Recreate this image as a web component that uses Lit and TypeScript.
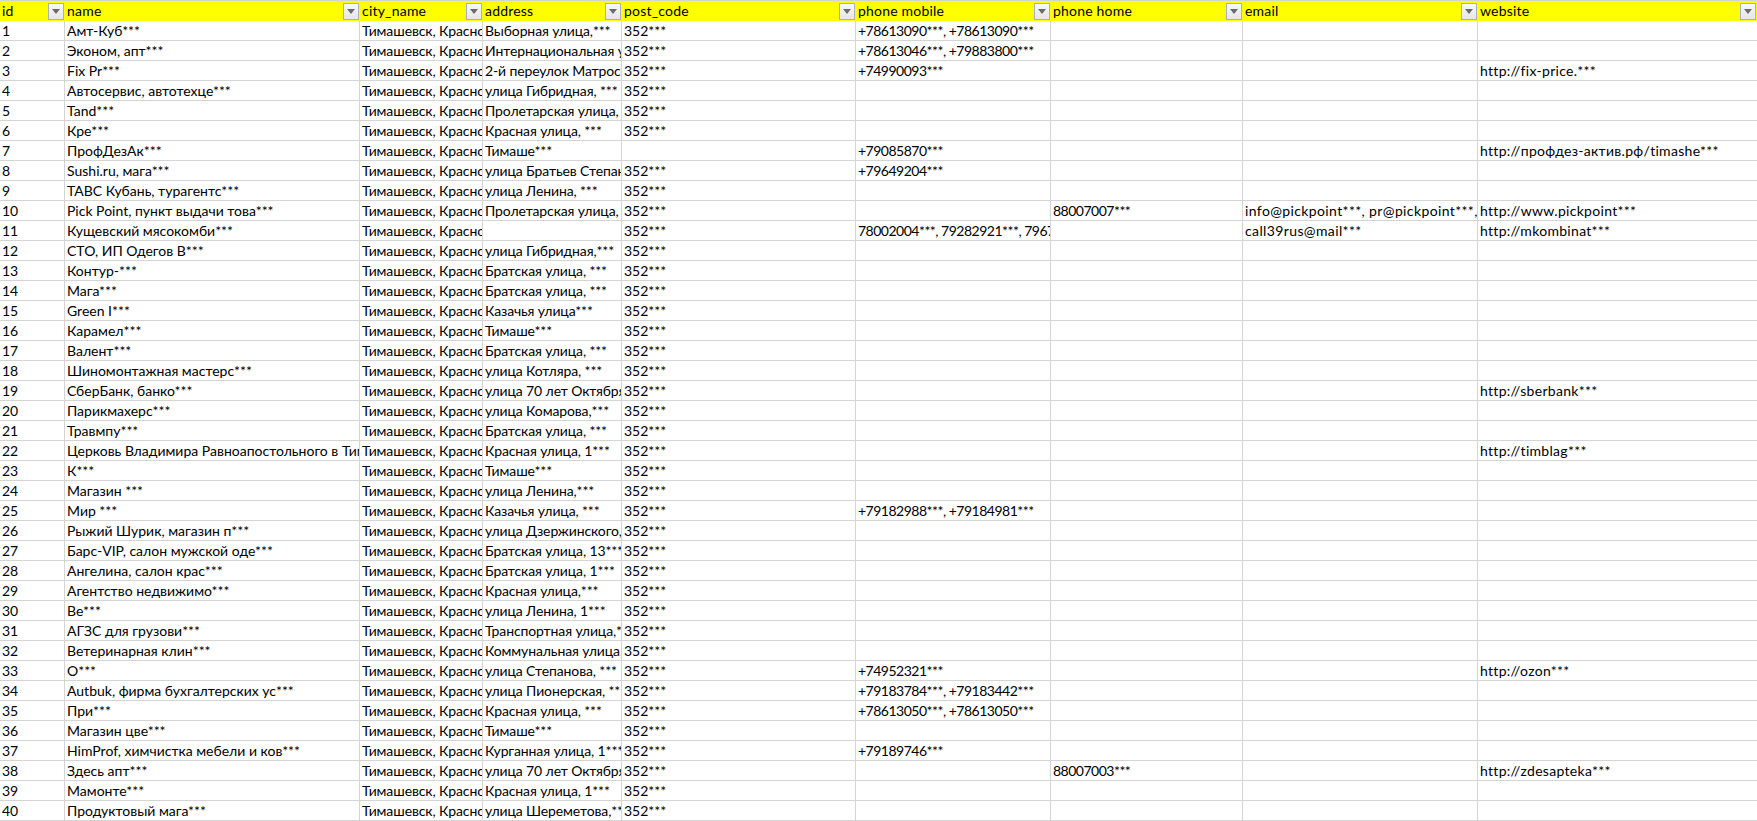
import { LitElement, html, css } from "lit";
import { customElement } from "lit/decorators.js";

type Row = { name: string; addr: string; post?: boolean; mobile?: string; home?: string; email?: string; web?: string };

const CITY = "Тимашевск, Краснодарский край";
const HEADERS = ["id", "name", "city_name", "address", "post_code", "phone mobile", "phone home", "email", "website"];
const COLUMN_CLASS = ["id", "name", "city", "addr", "post", "phone", "phone", "email", "web"];

const ROWS: Row[] = [
  { name: "Амт-Куб***", addr: "Выборная улица,***", mobile: "+78613090***, +78613090***" },
  { name: "Эконом, апт***", addr: "Интернациональная улица, ***", mobile: "+78613046***, +79883800***" },
  { name: "Fix Pr***", addr: "2-й переулок Матросова, ***", mobile: "+74990093***", web: "http://fix-price.***" },
  { name: "Автосервис, автотехце***", addr: "улица Гибридная, ***" },
  { name: "Tand***", addr: "Пролетарская улица, ***" },
  { name: "Кре***", addr: "Красная улица, ***" },
  { name: "ПрофДезАк***", addr: "Тимаше***", post: false, mobile: "+79085870***", web: "http://профдез-актив.рф/timashe***" },
  { name: "Sushi.ru, мага***", addr: "улица Братьев Степановых, ***", mobile: "+79649204***" },
  { name: "ТАВС Кубань, турагентс***", addr: "улица Ленина, ***" },
  { name: "Pick Point, пункт выдачи това***", addr: "Пролетарская улица, ***", home: "88007007***", email: "info@pickpoint***, pr@pickpoint***,", web: "http://www.pickpoint***" },
  { name: "Кущевский мясокомби***", addr: "", mobile: "78002004***, 79282921***, 79673***", email: "call39rus@mail***", web: "http://mkombinat***" },
  { name: "СТО, ИП Одегов В***", addr: "улица Гибридная,***" },
  { name: "Контур-***", addr: "Братская улица, ***" },
  { name: "Мага***", addr: "Братская улица, ***" },
  { name: "Green I***", addr: "Казачья улица***" },
  { name: "Карамел***", addr: "Тимаше***" },
  { name: "Валент***", addr: "Братская улица, ***" },
  { name: "Шиномонтажная мастерс***", addr: "улица Котляра, ***" },
  { name: "СберБанк, банко***", addr: "улица 70 лет Октября, ***", web: "http://sberbank***" },
  { name: "Парикмахерс***", addr: "улица Комарова,***" },
  { name: "Травмпу***", addr: "Братская улица, ***" },
  { name: "Церковь Владимира Равноапостольного в Тимашевске", addr: "Красная улица, 1***", web: "http://timblag***" },
  { name: "К***", addr: "Тимаше***" },
  { name: "Магазин ***", addr: "улица Ленина,***" },
  { name: "Мир ***", addr: "Казачья улица, ***", mobile: "+79182988***, +79184981***" },
  { name: "Рыжий Шурик, магазин п***", addr: "улица Дзержинского, ***" },
  { name: "Барс-VIP, салон мужской оде***", addr: "Братская улица, 13***" },
  { name: "Ангелина, салон крас***", addr: "Братская улица, 1***" },
  { name: "Агентство недвижимо***", addr: "Красная улица,***" },
  { name: "Ве***", addr: "улица Ленина, 1***" },
  { name: "АГЗС для грузови***", addr: "Транспортная улица,***" },
  { name: "Ветеринарная клин***", addr: "Коммунальная улица, ***" },
  { name: "О***", addr: "улица Степанова, ***", mobile: "+74952321***", web: "http://ozon***" },
  { name: "Autbuk, фирма бухгалтерских ус***", addr: "улица Пионерская, ***", mobile: "+79183784***, +79183442***" },
  { name: "При***", addr: "Красная улица, ***", mobile: "+78613050***, +78613050***" },
  { name: "Магазин цве***", addr: "Тимаше***" },
  { name: "HimProf, химчистка мебели и ков***", addr: "Курганная улица, 1***", mobile: "+79189746***" },
  { name: "Здесь апт***", addr: "улица 70 лет Октября, ***", home: "88007003***", web: "http://zdesapteka***" },
  { name: "Мамонте***", addr: "Красная улица, 1***" },
  { name: "Продуктовый мага***", addr: "улица Шереметова,***" },
];

@customElement("app-root")
export class AppRoot extends LitElement {
  static styles = css`
    :host {
      display: block;
      width: 1757px;
      height: 821px;
      overflow: hidden;
      background: #fff;
      color: #000;
      font-family: "Lato", "Noto Sans", "Open Sans", sans-serif;
      font-size: 14px;
    }
    .sheet {
      display: grid;
      grid-template-columns: 65px 295px 123px 139px 234px 195px 192px 235px 279px;
      grid-template-rows: 21px repeat(40, 20px);
    }
    .head {
      display: flex;
      align-items: center;
      justify-content: space-between;
      min-width: 0;
      box-sizing: border-box;
      background: #ffff00;
      border-top: 1px solid #d4d4d4;
      padding: 0 1px 0 2px;
      overflow: hidden;
      white-space: nowrap;
      letter-spacing: 0.2px;
    }
    .head span {
      line-height: 20px;
    }
    .filter {
      flex: none;
      box-sizing: border-box;
      width: 16px;
      height: 17px;
      display: flex;
      align-items: center;
      justify-content: center;
      background: linear-gradient(#f8f8f8, #e6e6e6);
      border: 1px solid #a9b0bf;
      margin-top: 1px;
    }
    .filter svg {
      display: block;
    }
    .cell {
      box-sizing: border-box;
      min-width: 0;
      height: 20px;
      padding-left: 2px;
      line-height: 19px;
      white-space: nowrap;
      overflow: hidden;
      border-right: 1px solid #d4d4d4;
      border-bottom: 1px solid #d4d4d4;
    }
    .cell.id {
      letter-spacing: -0.2px;
    }
    .cell.city {
      letter-spacing: -0.1px;
    }
    .cell.addr {
      letter-spacing: -0.12px;
    }
    .cell.phone {
      letter-spacing: -0.5px;
    }
    .cell.email {
      letter-spacing: 0.38px;
    }
    .cell.web {
      letter-spacing: 0.3px;
      border-right: none;
    }
  `;

  private renderHead(label: string) {
    return html`<div class="head">
      <span>${label}</span>
      <div class="filter">
        <svg width="8" height="5" viewBox="0 0 8 5"><path d="M0 0h8L4 5z" fill="#6b6b6b"></path></svg>
      </div>
    </div>`;
  }

  private renderRow(r: Row, i: number) {
    const values = [
      String(i + 1),
      r.name,
      CITY,
      r.addr,
      r.post === false ? "" : "352***",
      r.mobile ?? "",
      r.home ?? "",
      r.email ?? "",
      r.web ?? "",
    ];
    return values.map((v, c) => html`<div class="cell ${COLUMN_CLASS[c]}">${v}</div>`);
  }

  render() {
    return html`<div class="sheet">
      ${HEADERS.map((h) => this.renderHead(h))}
      ${ROWS.map((r, i) => this.renderRow(r, i))}
    </div>`;
  }
}
